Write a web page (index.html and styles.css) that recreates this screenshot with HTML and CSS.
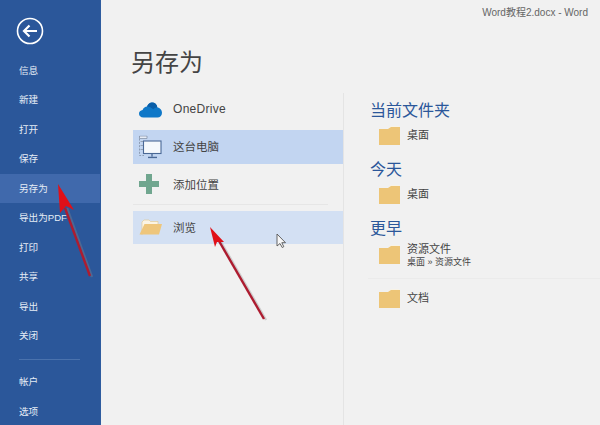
FILE: index.html
```html
<!DOCTYPE html>
<html lang="zh-CN">
<head>
<meta charset="utf-8">
<title>另存为</title>
<link rel="stylesheet" href="styles.css">
</head>
<body>
<div class="app">
  <nav class="side">
    <div class="back">
      <svg width="30" height="30" viewBox="0 0 30 30"><circle cx="15" cy="15" r="12.5" fill="none" stroke="#fff" stroke-width="1.6"/><path d="M22 15H9M14.500 9.500 9 15l5.500 5.500" fill="none" stroke="#fff" stroke-width="2.200"/></svg>
    </div>
    <ul class="menu">
      <li>信息</li><li>新建</li><li>打开</li><li>保存</li>
      <li class="on">另存为</li>
      <li>导出为PDF</li><li>打印</li><li>共享</li><li>导出</li><li>关闭</li>
    </ul>
    <div class="rule"></div>
    <ul class="menu">
      <li>帐户</li><li>选项</li>
    </ul>
  </nav>
  <main class="main">
    <div class="titlebar">Word教程2.docx - Word</div>
    <h1 class="title">另存为</h1>
    <div class="cols">
      <section class="places">
        <div class="place">
          <svg class="pic" width="23" height="16" viewBox="0 0 23 16"><path d="M4.500 15.500C1.500 15.500 0 13.800 0 11.800c0-2 1.400-3.500 3.600-3.700C4.200 5.500 6.500 4.400 8 4.400 9.200 1.800 11 .5 13 .5c2.800 0 5 2 5.300 4.700 2.700.5 4.700 2.900 4.700 5.500 0 2.800-2 4.800-4.500 4.800z" fill="#0f78c8"/><path d="M8 4.400C9.200 1.800 11 .5 13 .5c2.800 0 5 2 5.300 4.700-1.800.2-3 .9-4 2.100C12.400 5.500 10 4.300 8 4.400z" fill="#0a5ea8"/></svg>
          <span class="en">OneDrive</span>
        </div>
        <div class="place sel">
          <svg class="pic" width="23" height="23" viewBox="0 0 23 23"><path d="M5 1H.5v19H5" fill="none" stroke="#7f8ea5" stroke-width=".8" stroke-dasharray="2 1.300"/><path d="M.5.5H8v2.500H.5z" fill="#e6ecf6" stroke="#7d8ba0" stroke-width=".7"/><path d="M1.500 6h3M1.500 10h3M1.500 14h3" stroke="#8a97a8" stroke-width=".8"/><rect x="4.500" y="5.500" width="17.500" height="12.500" fill="#f5f8fc" stroke="#4a6896" stroke-width="1.100"/><path d="M13 18v3M9 22h9" stroke="#4a6896" stroke-width="1.300"/></svg>
          <span>这台电脑</span>
        </div>
        <div class="place">
          <svg class="pic" width="20" height="20" viewBox="0 0 20 20"><path d="M7 0h6v7h7v6h-7v7H7v-7H0V7h7z" fill="#70a68f"/></svg>
          <span>添加位置</span>
        </div>
        <div class="hr"></div>
        <div class="place hover">
          <svg class="pic" width="23" height="17" viewBox="0 0 23 17"><path d="M3 16V3.500L5 1.500h5l1.500 1.500H19v3H7z" fill="#fbf4e4" stroke="#e3c689" stroke-width=".6"/><path d="M5.500 5.500H23L20 16H.5z" fill="#eec67c"/></svg>
          <span>浏览</span>
        </div>
      </section>
      <section class="recent">
        <h2>当前文件夹</h2>
        <div class="folder"><svg class="fold" width="21" height="19" viewBox="0 0 21 19"><path d="M0 3h9l3-3h8v3z" fill="#f8f3e6"/><path d="M0 3h9l3-2h9v18H0z" fill="#edc577"/></svg><div class="names"><span>桌面</span></div></div>
        <h2>今天</h2>
        <div class="folder"><svg class="fold" width="21" height="19" viewBox="0 0 21 19"><path d="M0 3h9l3-3h8v3z" fill="#f8f3e6"/><path d="M0 3h9l3-2h9v18H0z" fill="#edc577"/></svg><div class="names"><span>桌面</span></div></div>
        <h2>更早</h2>
        <div class="folder two"><svg class="fold" width="21" height="19" viewBox="0 0 21 19"><path d="M0 3h9l3-3h8v3z" fill="#f8f3e6"/><path d="M0 3h9l3-2h9v18H0z" fill="#edc577"/></svg><div class="names lower"><span>资源文件</span><small>桌面 » 资源文件</small></div></div>
        <div class="hr2"></div>
        <div class="folder"><svg class="fold" width="21" height="19" viewBox="0 0 21 19"><path d="M0 3h9l3-3h8v3z" fill="#f8f3e6"/><path d="M0 3h9l3-2h9v18H0z" fill="#edc577"/></svg><div class="names"><span>文档</span></div></div>
      </section>
    </div>
  </main>
  <svg class="marks" width="600" height="425" viewBox="0 0 600 425">
    <g fill="none" stroke="#8a8a8a" stroke-opacity=".35" stroke-width="2.400"><path d="M92 277 67 208"/><path d="M266 320 221 242"/></g>
    <g fill="none" stroke="#ad1c30" stroke-width="2.400"><path d="M90 276 65 208"/><path d="M264 319 219 241"/></g>
    <path d="M58 184 74 210 66 206 60 213z" fill="#e01018"/>
    <path d="M210 227 224 242 217 242 215 247z" fill="#e01018"/>
    <path d="M277 234v12l3-2.500 2.200 4 1.600-.8-2-4h3.700z" fill="#f7f7f7" stroke="#555" stroke-width=".9"/>
  </svg>
</div>
</body>
</html>
```
FILE: styles.css
```css
* { box-sizing: border-box; }
html, body { margin: 0; padding: 0; }
body { width: 600px; height: 425px; overflow: hidden; font-family: "Liberation Sans", "Noto Sans CJK SC", sans-serif; background: #f1f1f1; color: #444; }
ul { list-style: none; margin: 0; padding: 0; }
.app { position: relative; display: flex; width: 600px; height: 425px; }
.side { width: 101px; flex: none; background: #2b579a; color: #e6edf6; padding-top: 16px; border-right: 1px solid #2f5c9f; }
.back { height: 39.500px; padding-left: 15px; }
.menu li { height: 29.5px; padding-left: 19px; line-height: 29.5px; font-size: 9.600px; }
.menu li.on { background: #4069ac; }
.rule { height: 1px; margin: 8px 20px 7.500px 19px; background: #4a72ad; }
.main { flex: 1; display: flex; flex-direction: column; min-width: 0; }
.titlebar { height: 25px; text-align: right; padding-right: 12px; font: 10px/25px "Liberation Sans", "Noto Sans CJK SC", sans-serif; color: #666; }
.title { margin: 0; height: 68px; padding: 18px 0 0 30px; font-size: 24px; font-weight: 400; line-height: 40px; color: #444; }
.cols { display: flex; flex: 1; }
.places { width: 242px; padding-left: 32px; flex: none; }
.place { display: flex; align-items: center; height: 33.500px; margin-bottom: 3.500px; font-size: 11.500px; color: #444; position: relative; padding-left: 40px; }
.pic { position: absolute; left: 6px; top: 50%; transform: translateY(-50%); }
.place.sel { background: #c2d5f1; }
.place.sel span { padding-bottom: 2px; }
.place.hover { background: #d3e0f3; height: 33px; }
.en { font-size: 12px; letter-spacing: .3px; padding-bottom: 2px; }
.hr { height: 1px; margin: 1.500px 15px 5.500px 0; background: #e6e6e6; }
.recent { flex: 1; border-left: 1px solid #e4e4e4; padding: 5px 0 0 26px; }
.recent h2 { margin: 0; height: 22px; padding-top: 2px; font-size: 16px; font-weight: 400; line-height: 22px; color: #2b579a; }
.folder { display: flex; align-items: center; height: 30px; padding-left: 9px; margin-bottom: 7px; font-size: 11px; color: #444; }
.folder.two { height: 33px; margin-bottom: 6.500px; }
.fold { flex: none; margin-right: 7px; }
.names { display: flex; flex-direction: column; line-height: 13px; }
.names.lower { padding-top: 2px; }
.names small { font-size: 9px; line-height: 13px; }
.hr2 { height: 1px; margin: 0 0 5px -2px; background: #ebebeb; }
.marks { position: absolute; left: 0; top: 0; pointer-events: none; }
```
